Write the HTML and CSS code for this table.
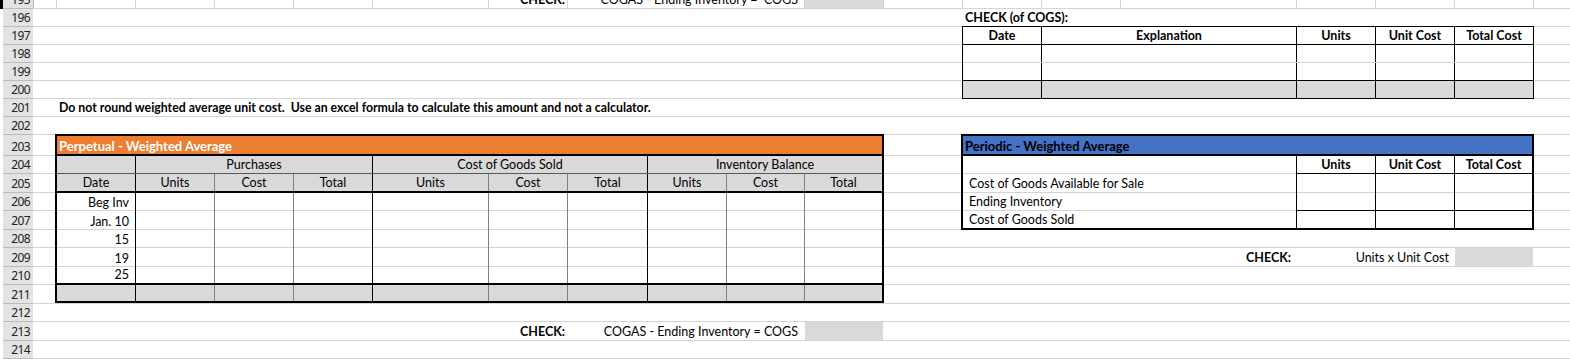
FILE: index.html
```html
<!DOCTYPE html>
<html lang="en">
<head>
<meta charset="utf-8">
<title>Weighted Average Worksheet</title>
<link rel="stylesheet" href="styles.css">
</head>
<body>
<div class="sheet">
  <div class="layer cols">
    <div class="hdr"></div>
    <div></div><div></div><div></div><div></div><div></div><div></div><div></div><div></div><div></div><div></div>
    <div></div><div></div><div></div><div></div><div></div><div></div><div></div><div></div><div></div>
  </div>
  <div class="layer lines">
    <div></div><div></div><div></div><div></div><div></div><div></div><div></div>
    <div></div><div></div><div></div><div></div><div></div><div></div><div></div>
    <div></div><div></div><div></div><div></div><div></div><div></div><div></div>
  </div>
  <div class="layer cells">
    <div class="rn">195</div><div class="rn">196</div><div class="rn">197</div><div class="rn">198</div>
    <div class="rn">199</div><div class="rn">200</div><div class="rn">201</div><div class="rn">202</div>
    <div class="rn">203</div><div class="rn">204</div><div class="rn">205</div><div class="rn">206</div>
    <div class="rn">207</div><div class="rn">208</div><div class="rn">209</div><div class="rn">210</div>
    <div class="rn">211</div><div class="rn">212</div><div class="rn">213</div><div class="rn">214</div>
    <div class="rn">215</div>

    <div class="c b r r195 cG">CHECK:</div>
    <div class="c bg r pr6 r195 cHJ">COGAS - Ending Inventory =  COGS</div>
    <div class="c fill r195 cK"></div>

    <div class="c b bg r196 cMN">CHECK (of COGS):</div>

    <div class="check-tbl">
      <div class="row head"><div>Date</div><div>Explanation</div><div>Units</div><div>Unit Cost</div><div>Total Cost</div></div>
      <div class="row mid"><div></div><div></div><div></div><div></div><div></div></div>
      <div class="row sep"><div></div><div></div><div></div><div></div><div></div></div>
      <div class="row sum"><div></div><div></div><div></div><div></div><div></div></div>
    </div>

    <div class="c b bg note r201 cBI">Do not round weighted average unit cost.  Use an excel formula to calculate this amount and not a calculator.</div>

    <div class="perp">
      <div class="title">Perpetual - Weighted Average</div>
      <div class="row groups"><div></div><div class="span3">Purchases</div><div class="span3">Cost of Goods Sold</div><div class="span3">Inventory Balance</div></div>
      <div class="row heads"><div>Date</div><div>Units</div><div>Cost</div><div>Total</div><div>Units</div><div>Cost</div><div>Total</div><div>Units</div><div>Cost</div><div>Total</div></div>
      <div class="row data h18"><div>Beg Inv</div><div></div><div></div><div></div><div></div><div></div><div></div><div></div><div></div><div></div></div>
      <div class="row data h19"><div>Jan. 10</div><div></div><div></div><div></div><div></div><div></div><div></div><div></div><div></div><div></div></div>
      <div class="row data h18"><div>15</div><div></div><div></div><div></div><div></div><div></div><div></div><div></div><div></div><div></div></div>
      <div class="row data h19"><div>19</div><div></div><div></div><div></div><div></div><div></div><div></div><div></div><div></div><div></div></div>
      <div class="row data h16"><div>25</div><div></div><div></div><div></div><div></div><div></div><div></div><div></div><div></div><div></div></div>
      <div class="row total"><div></div><div></div><div></div><div></div><div></div><div></div><div></div><div></div><div></div><div></div></div>
    </div>

    <div class="peri">
      <div class="title">Periodic - Weighted Average</div>
      <div class="row head h18"><div></div><div></div><div class="val">Units</div><div class="val">Unit Cost</div><div class="val">Total Cost</div></div>
      <div class="row h19"><div class="lbl wide">Cost of Goods Available for Sale</div><div class="val"></div><div class="val"></div><div class="val"></div></div>
      <div class="row mark h18"><div class="lbl">Ending Inventory</div><div></div><div class="val"></div><div class="val"></div><div class="val"></div></div>
      <div class="row h17"><div class="lbl last">Cost of Goods Sold</div><div></div><div class="val"></div><div class="val"></div><div class="val"></div></div>
    </div>

    <div class="c b r pr5 r209 cO">CHECK:</div>
    <div class="c bg r pr5 r209 cPQ">Units x Unit Cost</div>
    <div class="c fill r209 cR"></div>

    <div class="c b r r213 cG">CHECK:</div>
    <div class="c bg r pr6 r213 cHJ">COGAS - Ending Inventory = COGS</div>
    <div class="c fill r213 cK"></div>
  </div>
</div>
</body>
</html>
```
FILE: styles.css
```css
:root {
  --cols: 34px 23px 79px 79px 79px 79px 116px 79px 80px 79px 78px 79px 79px 79px 79px 176px 79px 79px 79px 79px;
  --rows: 9px repeat(7, 18px) 21px 18px 19px 18px 19px 18px 19px 18px 19px 18px 19px 18px 18px;
  --grid: #d4d4d4;
  --fill: #d9d9d9;
  --hdr: #e3e3e3;
}

*, *::before, *::after { box-sizing: border-box; }

html, body {
  margin: 0;
  overflow: hidden;
  background: #fff;
}

.sheet {
  display: grid;
  width: max-content;
  font: 12.5px/12px "Lato", sans-serif;
  color: #000;
}

.layer {
  grid-area: 1 / 1;
  display: grid;
  grid-template-rows: var(--rows);
}

.cols, .cells { grid-template-columns: var(--cols); }

/* vertical gridlines */
.cols > div { border-right: 1px solid var(--grid); }
.cols > .hdr {
  background: var(--hdr);
  border-left: 3px solid #000;
  border-right-color: #bcbcbc;
}

/* horizontal gridlines */
.lines > div {
  border-bottom: 1px solid var(--grid);
  margin-left: 3px;
}

/* row numbers */
.rn {
  grid-column: 1;
  margin: 0 1px 0 3px;
  background: var(--hdr);
  border-bottom: 1px solid #bcbcbc;
  display: flex;
  align-items: flex-end;
  justify-content: flex-end;
  padding: 0 3px 2px 0;
  font: 12px/12px "Noto Sans", sans-serif;
  letter-spacing: -0.6px;
  color: #222;
  overflow: hidden;
}

/* generic cells */
.c {
  display: flex;
  align-items: flex-end;
  white-space: pre;
  overflow: hidden;
  margin: 0 1px 1px 0;
  padding: 0 2px 2px;
}
.bg { background: #fff; }
.fill { background: var(--fill); }
.r { justify-content: flex-end; }
.b { font-weight: 700; }
.note { font-size: 12.3px; }
.pr5 { padding-right: 5px; }
.pr6 { padding-right: 6px; }

.r195 { grid-row: 1; }
.r196 { grid-row: 2; }
.r201 { grid-row: 7; }
.r209 { grid-row: 15; }
.r213 { grid-row: 19; }

.cBI { grid-column: 3 / 11; }
.cG  { grid-column: 8; }
.cHJ { grid-column: 9 / 12; }
.cK  { grid-column: 12; }
.cMN { grid-column: 14 / 16; }
.cO  { grid-column: 16; }
.cPQ { grid-column: 17 / 19; }
.cR  { grid-column: 19; }

.h16 { height: 16px; }
.h17 { height: 17px; }
.h18 { height: 18px; }
.h19 { height: 19px; }

/* CHECK (of COGS) table */
.check-tbl {
  grid-row: 3 / 7;
  grid-column: 14 / 20;
  margin: -1px 0 0 -1px;
  border: 1px solid #000;
  display: flex;
  flex-direction: column;
}
.check-tbl .row {
  display: grid;
  grid-template-columns: 79px 255px 79px 79px 78px;
  height: 18px;
  background: #fff;
}
.check-tbl .row > * {
  border-right: 1px solid #000;
  display: flex;
  align-items: flex-end;
  justify-content: center;
  padding-bottom: 2px;
  font-weight: 700;
}
.check-tbl .row > :last-child { border-right: 0; }
.check-tbl .head { border-bottom: 1px solid #000; }
.check-tbl .mid { border-bottom: 1px solid var(--grid); }
.check-tbl .sep { border-bottom: 1px solid #000; }
.check-tbl .sum { height: 17px; background: var(--fill); }

/* Perpetual table */
.perp {
  grid-row: 9 / 18;
  grid-column: 3 / 13;
  margin: -1px 0 1px -2px;
  border: 2px solid #000;
  display: flex;
  flex-direction: column;
}
.perp .title, .peri .title {
  height: 20px;
  border-bottom: 2px solid #000;
  font-weight: 700;
  font-size: 13px;
  display: flex;
  align-items: flex-end;
  padding: 0 2px 2px;
  white-space: pre;
}
.perp .title { background: #ed7d31; color: #fff; }
.perp .row {
  display: grid;
  grid-template-columns: 79px 79px 79px 79px 116px 79px 80px 79px 78px 77px;
}
.perp .row > * {
  border-right: 1px solid #808080;
  display: flex;
  align-items: flex-end;
  padding: 0 2px 2px;
  white-space: pre;
}
.perp .row > :nth-child(3n+1) { border-right-color: #000; }
.perp .row > :last-child { border-right: 0; }
.perp .groups {
  height: 18px;
  background: var(--fill);
  border-bottom: 1px solid #595959;
}
.perp .groups > * { border-right-color: #000; justify-content: center; }
.perp .groups > .span3 { grid-column: span 3; }
.perp .heads {
  height: 19px;
  background: var(--fill);
  border-bottom: 2px solid #000;
}
.perp .heads > * { justify-content: center; }
.perp .data > :first-child { justify-content: flex-end; padding-right: 6px; }
.perp .total {
  height: 18px;
  background: var(--fill);
  border-top: 2px solid #000;
}

/* Periodic table */
.peri {
  grid-row: 9 / 14;
  grid-column: 14 / 20;
  margin: -1px 0 0 -2px;
  border: 2px solid #000;
  display: flex;
  flex-direction: column;
}
.peri .title { background: #4472c4; color: #000; }
.peri .row {
  display: grid;
  grid-template-columns: 157px 176px 79px 79px 78px;
}
.peri .row > * {
  display: flex;
  align-items: flex-end;
  padding: 0 2px 2px;
}
.peri .row > .val { border-left: 1px solid #000; }
.peri .head > .val {
  border-bottom: 1px solid #000;
  justify-content: center;
  font-weight: 700;
}
.peri .mark > .val { border-bottom: 1px solid #000; }
.peri .lbl {
  background: #fff;
  margin-bottom: 1px;
  padding-left: 6px;
  white-space: pre;
  overflow: hidden;
}
.peri .lbl.last { margin-bottom: 0; }
.peri .wide { grid-column: 1 / 3; }
```
